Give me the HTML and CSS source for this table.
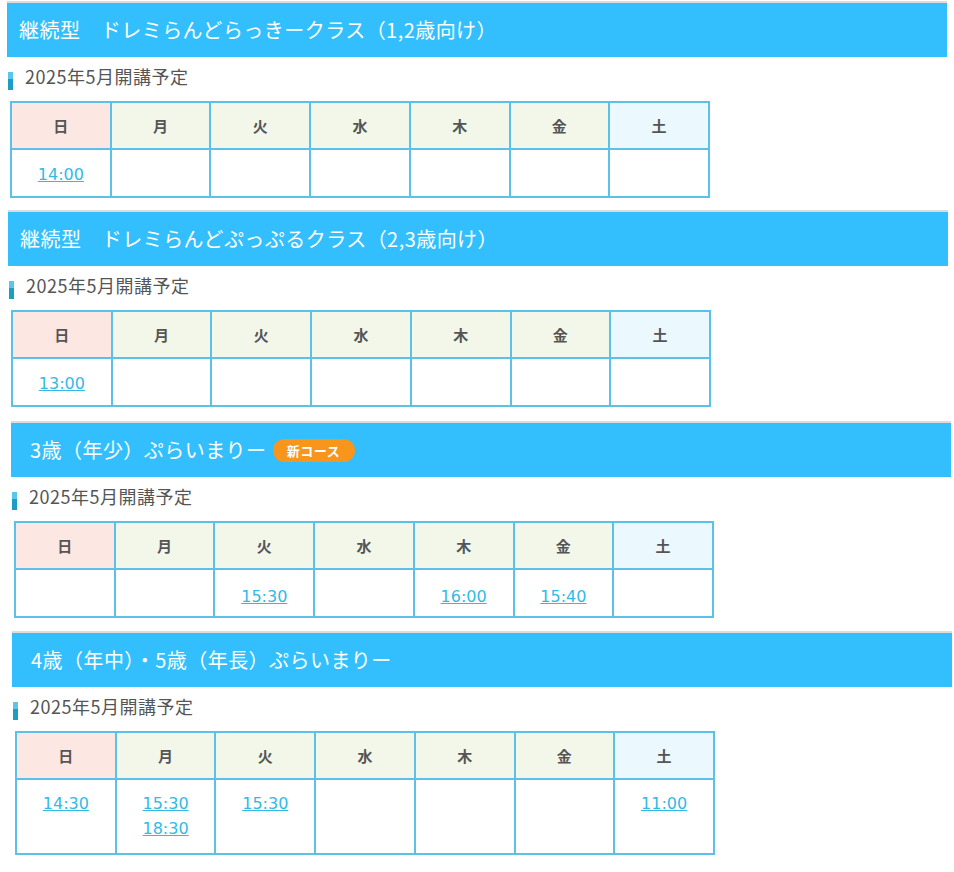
FILE: index.html
```html
<!DOCTYPE html>
<html lang="ja">
<head>
<meta charset="utf-8">
<title>スケジュール</title>
<link rel="stylesheet" href="styles.css">
</head>
<body>
<section class="course course-a">
  <h2 class="course-title">継続型　ドレミらんどらっきークラス（1,2歳向け）</h2>
  <p class="open-date">2025年5月開講予定</p>
  <table class="schedule">
    <tr>
      <th class="sun">日</th><th>月</th><th>火</th><th>水</th><th>木</th><th>金</th><th class="sat">土</th>
    </tr>
    <tr>
      <td><a href="#">14:00</a></td><td></td><td></td><td></td><td></td><td></td><td></td>
    </tr>
  </table>
</section>

<section class="course course-b">
  <h2 class="course-title">継続型　ドレミらんどぷっぷるクラス（2,3歳向け）</h2>
  <p class="open-date">2025年5月開講予定</p>
  <table class="schedule">
    <tr>
      <th class="sun">日</th><th>月</th><th>火</th><th>水</th><th>木</th><th>金</th><th class="sat">土</th>
    </tr>
    <tr>
      <td><a href="#">13:00</a></td><td></td><td></td><td></td><td></td><td></td><td></td>
    </tr>
  </table>
</section>

<section class="course course-c">
  <h2 class="course-title course-title--wide">3歳（年少）ぷらいまりー<span class="badge">新コース</span></h2>
  <p class="open-date">2025年5月開講予定</p>
  <table class="schedule schedule--low">
    <tr>
      <th class="sun">日</th><th>月</th><th>火</th><th>水</th><th>木</th><th>金</th><th class="sat">土</th>
    </tr>
    <tr>
      <td></td><td></td><td><a href="#">15:30</a></td><td></td><td><a href="#">16:00</a></td><td><a href="#">15:40</a></td><td></td>
    </tr>
  </table>
</section>

<section class="course course-d">
  <h2 class="course-title course-title--wide">4歳（年中）・5歳（年長）ぷらいまりー</h2>
  <p class="open-date">2025年5月開講予定</p>
  <table class="schedule schedule--tall">
    <tr>
      <th class="sun">日</th><th>月</th><th>火</th><th>水</th><th>木</th><th>金</th><th class="sat">土</th>
    </tr>
    <tr>
      <td><a href="#">14:30</a></td><td><a href="#">15:30</a><br><a href="#">18:30</a></td><td><a href="#">15:30</a></td><td></td><td></td><td></td><td><a href="#">11:00</a></td>
    </tr>
  </table>
</section>
</body>
</html>
```
FILE: styles.css
```css
html, body {
  margin: 0;
  padding: 0;
  background: #ffffff;
}

body {
  padding-top: 1px;
  font-family: "Noto Sans CJK JP", "Noto Sans", sans-serif;
  color: #555555;
}

.course {
  width: 940px;
  margin-bottom: 12px;
}

.course-a { margin-left: 7px; }
.course-b { margin-left: 8px; margin-bottom: 14px; }
.course-c { margin-left: 11px; margin-bottom: 13px; }
.course-d { margin-left: 12px; }

.course-title {
  margin: 0;
  height: 54px;
  border-top: 2px solid #dcdcdc;
  background: #33bffd;
  color: #ffffff;
  font-size: 20px;
  font-weight: 400;
  line-height: 54px;
  letter-spacing: 0.45px;
  padding-left: 12px;
  display: flex;
  align-items: center;
}

.course-title--wide {
  padding-left: 19px;
}

.badge {
  display: inline-flex;
  align-items: center;
  justify-content: center;
  margin-left: 6px;
  width: 82px;
  height: 23px;
  border-radius: 12px;
  background: #f7951d;
  color: #ffffff;
  font-size: 13px;
  font-weight: 700;
  line-height: 23px;
  letter-spacing: 0.5px;
}

.open-date {
  margin: 9px 0 15px 1px;
  height: 20px;
  display: flex;
  align-items: flex-start;
  font-size: 18px;
  line-height: 20px;
  letter-spacing: 0.5px;
  color: #555555;
}

.open-date::before {
  content: "";
  display: block;
  flex: none;
  width: 5px;
  height: 18px;
  margin-right: 12px;
  margin-top: 6px;
  background: linear-gradient(to bottom, #5cc6e8 0%, #5cc6e8 40%, #1b9ec4 40%, #1b9ec4 100%);
}

.schedule {
  margin-left: 3px;
  width: 700px;
  border-collapse: collapse;
  table-layout: fixed;
}

.schedule th,
.schedule td {
  border: 2px solid #5bc1e9;
  text-align: center;
}

.schedule th {
  height: 47px;
  padding: 0;
  background: #f2f7ea;
  color: #555555;
  font-size: 15px;
  font-weight: 700;
  box-sizing: border-box;
}

.schedule th.sun { background: #fde7e2; }
.schedule th.sat { background: #ebf8fd; }

.schedule td {
  vertical-align: top;
  padding: 12px 0 9px;
  height: 25px;
  font-family: "DejaVu Sans", "Noto Sans CJK JP", sans-serif;
  font-size: 16px;
  line-height: 25px;
}

.schedule--low td {
  padding: 14px 0 7px;
}

.schedule--tall td {
  padding: 11px 0 12px;
}

.schedule a {
  color: #33bae4;
  text-decoration: underline;
  font-weight: 400;
}
```
